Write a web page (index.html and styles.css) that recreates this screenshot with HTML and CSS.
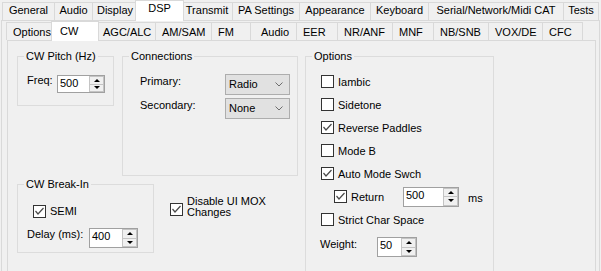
FILE: index.html
```html
<!DOCTYPE html>
<html lang="en">
  <head>
    <title>Setup - DSP - CW</title>
    <link rel="stylesheet" href="styles.css">
  </head>

  <body>
    <div class="tabs tabs-main">
      <div class="tab">General</div>
      <div class="tab">Audio</div>
      <div class="tab">Display</div>
      <div class="tab selected">DSP</div>
      <div class="tab">Transmit</div>
      <div class="tab">PA Settings</div>
      <div class="tab">Appearance</div>
      <div class="tab">Keyboard</div>
      <div class="tab">Serial/Network/Midi CAT</div>
      <div class="tab">Tests</div>
    </div>

    <div class="panel panel-main">
      <div class="tabs tabs-sub">
        <div class="tab">Options</div>
        <div class="tab selected">CW</div>
        <div class="tab">AGC/ALC</div>
        <div class="tab">AM/SAM</div>
        <div class="tab">FM</div>
        <div class="tab">Audio</div>
        <div class="tab">EER</div>
        <div class="tab">NR/ANF</div>
        <div class="tab">MNF</div>
        <div class="tab">NB/SNB</div>
        <div class="tab">VOX/DE</div>
        <div class="tab">CFC</div>
      </div>

      <div class="panel panel-sub">
        <div class="content">
          <div class="col-left">
            <div class="row-top">
              <!-- CW pitch -->
              <div class="group group-pitch">
                <span class="group-title">CW Pitch (Hz)</span>
                <div class="field">
                  <span class="field-label label-freq">Freq:</span>
                  <div class="num num-pitch">
                    <span class="num-value">500</span>
                    <span class="spin"><span class="spin-btn up"></span><span class="spin-btn down"></span></span>
                  </div>
                </div>
              </div>

              <!-- Connections -->
              <div class="group group-conn">
                <span class="group-title">Connections</span>
                <div class="field">
                  <span class="field-label label-conn">Primary:</span>
                  <div class="combo">
                    <span class="combo-value">Radio</span>
                    <svg class="chevron" width="8" height="5" viewBox="0 0 8 5"><polyline points="0.5,0.5 4,4 7.5,0.5" fill="none" stroke="#6d6d6d" stroke-width="1"/></svg>
                  </div>
                </div>
                <div class="field field-gap">
                  <span class="field-label label-conn">Secondary:</span>
                  <div class="combo">
                    <span class="combo-value">None</span>
                    <svg class="chevron" width="8" height="5" viewBox="0 0 8 5"><polyline points="0.5,0.5 4,4 7.5,0.5" fill="none" stroke="#6d6d6d" stroke-width="1"/></svg>
                  </div>
                </div>
              </div>
            </div>

            <div class="row-bottom">
              <!-- Break-in -->
              <div class="group group-breakin">
                <span class="group-title">CW Break-In</span>
                <label class="check check-semi">
                  <span class="box checked"><svg width="11" height="11" viewBox="0 0 11 11"><polyline points="1.5,5 4,8 9.5,2" fill="none" stroke="#4a4a4a" stroke-width="1.2"/></svg></span>
                  <span class="check-text">SEMI</span>
                </label>
                <div class="field field-delay">
                  <span class="field-label label-delay">Delay (ms):</span>
                  <div class="num num-delay">
                    <span class="num-value">400</span>
                    <span class="spin"><span class="spin-btn up"></span><span class="spin-btn down"></span></span>
                  </div>
                </div>
              </div>

              <label class="check check-mox">
                <span class="box checked"><svg width="11" height="11" viewBox="0 0 11 11"><polyline points="1.5,5 4,8 9.5,2" fill="none" stroke="#4a4a4a" stroke-width="1.2"/></svg></span>
                <span class="check-text">Disable UI MOX Changes</span>
              </label>
            </div>
          </div>

          <!-- Options -->
          <div class="group group-options">
            <span class="group-title">Options</span>
            <div class="check-row">
              <label class="check"><span class="box"></span><span class="check-text">Iambic</span></label>
            </div>
            <div class="check-row">
              <label class="check"><span class="box"></span><span class="check-text">Sidetone</span></label>
            </div>
            <div class="check-row">
              <label class="check"><span class="box checked"><svg width="11" height="11" viewBox="0 0 11 11"><polyline points="1.5,5 4,8 9.5,2" fill="none" stroke="#4a4a4a" stroke-width="1.2"/></svg></span><span class="check-text">Reverse Paddles</span></label>
            </div>
            <div class="check-row">
              <label class="check"><span class="box"></span><span class="check-text">Mode B</span></label>
            </div>
            <div class="check-row">
              <label class="check"><span class="box checked"><svg width="11" height="11" viewBox="0 0 11 11"><polyline points="1.5,5 4,8 9.5,2" fill="none" stroke="#4a4a4a" stroke-width="1.2"/></svg></span><span class="check-text">Auto Mode Swch</span></label>
            </div>
            <div class="check-row row-return">
              <label class="check check-return"><span class="box checked"><svg width="11" height="11" viewBox="0 0 11 11"><polyline points="1.5,5 4,8 9.5,2" fill="none" stroke="#4a4a4a" stroke-width="1.2"/></svg></span><span class="check-text">Return</span></label>
              <div class="num num-return">
                <span class="num-value">500</span>
                <span class="spin"><span class="spin-btn up"></span><span class="spin-btn down"></span></span>
              </div>
              <span class="unit">ms</span>
            </div>
            <div class="check-row">
              <label class="check"><span class="box"></span><span class="check-text">Strict Char Space</span></label>
            </div>
            <div class="field field-weight">
              <span class="field-label label-weight">Weight:</span>
              <div class="num num-weight">
                <span class="num-value">50</span>
                <span class="spin"><span class="spin-btn up"></span><span class="spin-btn down"></span></span>
              </div>
            </div>
          </div>
        </div>
      </div>
    </div>
  </body>
</html>
```

FILE: styles.css
```css
/* whole window - classic WinForms setup dialog */
body {
  margin: 0;
  background-color: #f0f0f0;
  font-family: "Liberation Sans", Arial, sans-serif;
  font-size: 11px;
  color: #000;
  overflow: hidden;
}

/* tab strips */
.tabs {
  display: flex;
  align-items: flex-end;
}

.tabs-main {
  height: 20px;
  padding-left: 2px;
}

.tabs-sub {
  height: 19px;
  margin-left: 4px;
}

.tab {
  box-sizing: border-box;
  height: 18px;
  margin-right: -1px;
  border: 1px solid #d9d9d9;
  border-bottom: none;
  background-color: #f0f0f0;
  line-height: 14px;
  white-space: nowrap;
}

.tabs-main .tab {
  text-align: center;
}

.tabs-sub .tab {
  padding: 2px 0 0 6px;
}

/* the selected tab is 2px wider each side and sits over the panel edge */
.tab.selected {
  position: relative;
  z-index: 1;
  margin-left: -2px;
  margin-right: -3px;
  margin-bottom: -1px;
  background-color: #fff;
}

.tabs-main .tab.selected {
  height: 21px;
}

.tabs-sub .tab.selected {
  height: 20px;
  padding-left: 8px;
}

.tabs-main .tab:nth-child(1) { width: 53px; }
.tabs-main .tab:nth-child(2) { width: 39px; }
.tabs-main .tab:nth-child(3) { width: 46px; }
.tabs-main .tab:nth-child(4) { width: 49px; }
.tabs-main .tab:nth-child(5) { width: 52px; }
.tabs-main .tab:nth-child(6) { width: 68px; }
.tabs-main .tab:nth-child(7) { width: 72px; }
.tabs-main .tab:nth-child(8) { width: 59px; }
.tabs-main .tab:nth-child(9) { width: 136px; }
.tabs-main .tab:nth-child(10) { width: 36px; }

.tabs-sub .tab:nth-child(1) { width: 48px; }
.tabs-sub .tab:nth-child(2) { width: 48px; }
.tabs-sub .tab:nth-child(3) { width: 60px; }
.tabs-sub .tab:nth-child(4) { width: 57px; }
.tabs-sub .tab:nth-child(5) { width: 40px; }
.tabs-sub .tab:nth-child(6) { width: 47px; padding-left: 10px; }
.tabs-sub .tab:nth-child(7) { width: 42px; }
.tabs-sub .tab:nth-child(8) { width: 56px; }
.tabs-sub .tab:nth-child(9) { width: 42px; }
.tabs-sub .tab:nth-child(10) { width: 56px; }
.tabs-sub .tab:nth-child(11) { width: 55px; }
.tabs-sub .tab:nth-child(12) { width: 41px; }

/* tab pages - their bottom edges are below the window */
.panel {
  border: 1px solid #d9d9d9;
  border-bottom: none;
  background-color: #f0f0f0;
  overflow: hidden;
}

.panel-main {
  height: 250px;
  margin: 0 1px 0 1px;
}

.panel-sub {
  height: 230px;
  margin: 0 3px 0 5px;
}

.content {
  display: flex;
  align-items: flex-start;
  padding: 15px 0 0 9px;
}

.row-top,
.row-bottom {
  display: flex;
  align-items: flex-start;
}

.row-bottom {
  margin-top: 8px;
}

/* group boxes */
.group {
  position: relative;
  box-sizing: border-box;
  border: 1px solid #dcdcdc;
}

.group-title {
  position: absolute;
  top: -8px;
  left: 6px;
  padding: 0 2px;
  background-color: #f0f0f0;
  line-height: 14px;
  white-space: nowrap;
}

.group-pitch {
  width: 97px;
  height: 50px;
  padding: 18px 0 0 9px;
}

.group-conn {
  width: 176px;
  height: 120px;
  margin-left: 8px;
  padding: 17px 0 0 17px;
}

.group-breakin {
  width: 137px;
  height: 69px;
  padding: 19px 0 0 15px;
}

.group-options {
  width: 189px;
  height: 215px;
  margin-left: 7px;
  padding: 13px 0 0 15px;
  border-bottom: none;
}

/* label + control rows */
.field {
  display: flex;
  align-items: flex-start;
}

.field-gap {
  margin-top: 3px;
}

.field-label {
  line-height: 14px;
  white-space: nowrap;
}

.label-freq { width: 30px; margin-top: -2px; }
.label-conn { width: 85px; }
.label-delay { width: 62px; margin-top: -1px; }
.label-weight { width: 57px; }

.field-delay {
  margin: 10px 0 0 -6px;
}

.field-weight {
  margin: 6px 0 0 -1px;
}

/* numeric up/down */
.num {
  box-sizing: border-box;
  display: flex;
  border: 1px solid #a0a0a0;
  background-color: #fff;
}

.num-value {
  flex: 1;
  padding-left: 2px;
  line-height: 14px;
}

.num-pitch { width: 48px; height: 18px; }
.num-delay { width: 49px; height: 20px; }
.num-return { width: 56px; height: 20px; }
.num-weight { width: 40px; height: 20px; }

.spin {
  display: flex;
  flex-direction: column;
  width: 15px;
}

.spin-btn {
  flex: 1;
  display: flex;
  align-items: center;
  justify-content: center;
  border: 1px solid #c4c4c4;
  background-color: #f0f0f0;
}

.spin-btn + .spin-btn {
  border-top: none;
}

.spin-btn::before {
  content: "";
  border-left: 3px solid transparent;
  border-right: 3px solid transparent;
}

.spin-btn.up::before {
  border-bottom: 3px solid #000;
}

.spin-btn.down::before {
  border-top: 3px solid #000;
}

/* combo boxes */
.combo {
  box-sizing: border-box;
  display: flex;
  align-items: center;
  width: 65px;
  height: 21px;
  padding: 0 6px 0 3px;
  border: 1px solid #adadad;
  background-color: #e1e1e1;
}

.combo-value {
  flex: 1;
  line-height: 19px;
}

/* check boxes */
.check {
  display: flex;
  align-items: center;
  gap: 4px;
}

.box {
  box-sizing: border-box;
  display: flex;
  width: 13px;
  height: 13px;
  border: 1px solid #333;
  background-color: #fff;
}

.check-text {
  line-height: 14px;
  white-space: nowrap;
}

.check-row {
  display: flex;
  align-items: center;
  height: 23px;
}

.row-return {
  padding-left: 13px;
}

.check-return {
  width: 69px;
}

.unit {
  margin: 3px 0 0 9px;
  line-height: 14px;
}

.check-mox {
  align-items: flex-start;
  margin: 12px 0 0 16px;
}

.check-mox .box {
  margin-top: 7px;
}

.check-mox .check-text {
  width: 90px;
  line-height: 11px;
  white-space: normal;
}
```
